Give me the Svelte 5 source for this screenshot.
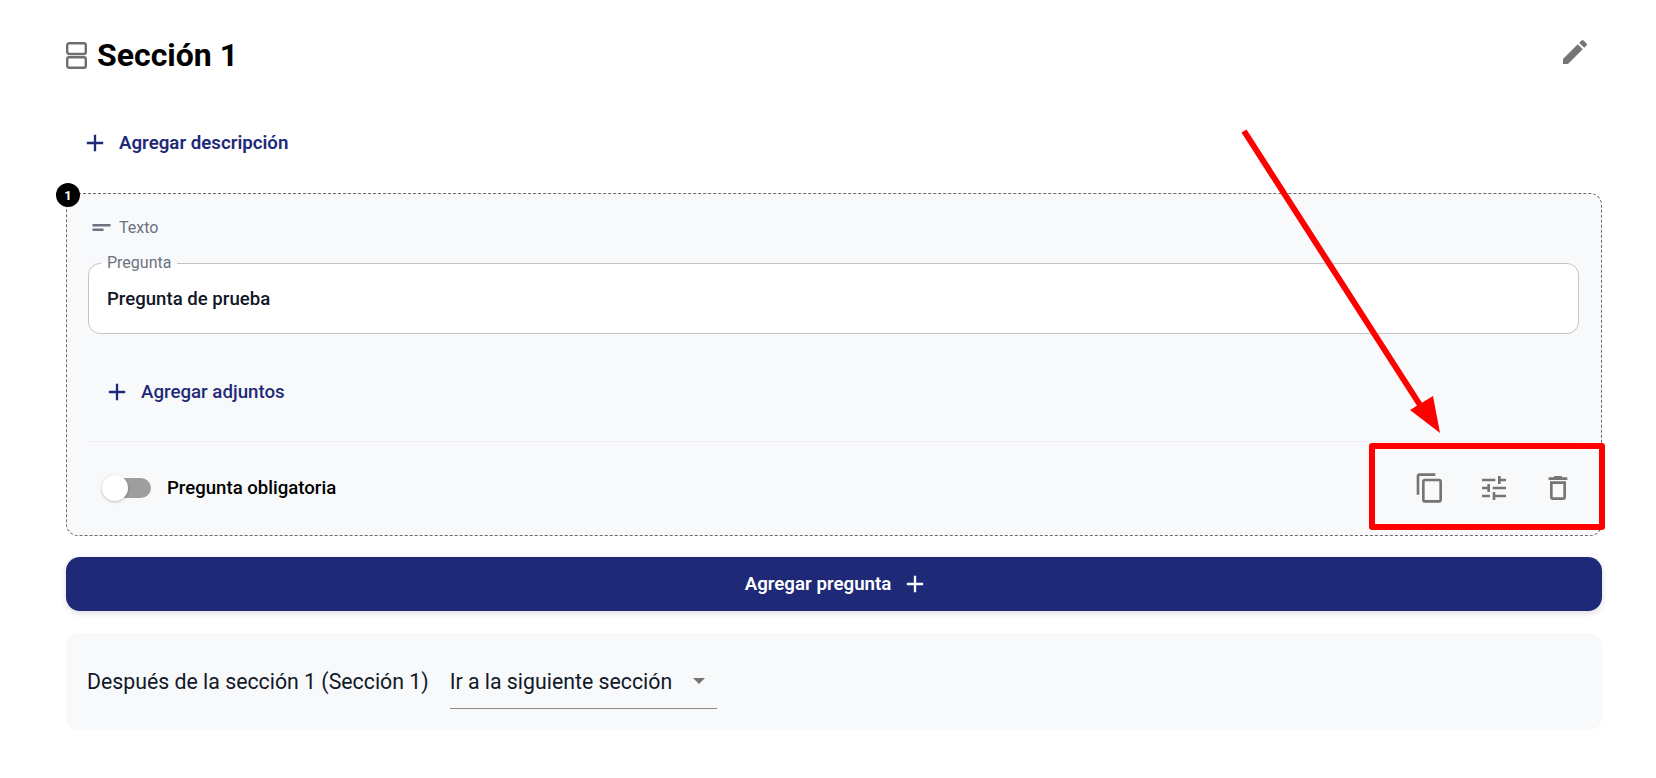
<script lang="ts">
	const PLUS = 'M19 13h-6v6h-2v-6H5v-2h6V5h2v6h6v2z';
</script>

<main class="section">
	<header class="section__head">
		<div class="section__title">
			<svg class="icon-rows" viewBox="0 0 21 27" width="21" height="27" aria-hidden="true">
				<rect x="1.2" y="1.2" width="18.600" height="10.800" rx="2" />
				<rect x="1.2" y="15.200" width="18.600" height="10.600" rx="2" />
			</svg>
			<h1>Sección 1</h1>
		</div>
		<button class="icon-btn edit" aria-label="Editar">
			<svg viewBox="0 0 24 24" width="32" height="32"><path d="M3 17.25V21h3.75L17.81 9.94l-3.75-3.75L3 17.25zM20.71 7.04a1 1 0 0 0 0-1.41l-2.34-2.34a1 1 0 0 0-1.41 0l-1.83 1.83 3.75 3.75 1.83-1.83z" /></svg>
		</button>
	</header>

	<button class="link link--desc">
		<svg viewBox="0 0 24 24" width="28" height="28"><path d={PLUS} /></svg>
		Agregar descripción
	</button>

	<section class="question">
		<span class="question__num">1</span>
		<div class="question__type">
			<svg viewBox="0 0 24 24" width="24" height="24"><path d="M4.500 9h18v2.500h-18zM4.500 13.500h11v2.500h-11z" /></svg>
			Texto
		</div>

		<div class="field">
			<span class="field__label">Pregunta</span>
			<div class="field__value">Pregunta de prueba</div>
		</div>

		<button class="link link--attach">
			<svg viewBox="0 0 24 24" width="28" height="28"><path d={PLUS} /></svg>
			Agregar adjuntos
		</button>

		<div class="question__foot">
			<div class="toggle">
				<span class="toggle__track"><span class="toggle__thumb"></span></span>
				<span class="toggle__label">Pregunta obligatoria</span>
			</div>
			<div class="actions">
				<svg viewBox="0 0 24 24" width="32" height="32"><path d="M16 1H4c-1.100 0-2 .9-2 2v14h2V3h12V1zm3 4H8c-1.100 0-2 .9-2 2v14c0 1.100.9 2 2 2h11c1.100 0 2-.9 2-2V7c0-1.100-.9-2-2-2zm0 16H8V7h11v14z" /></svg>
				<svg viewBox="0 0 24 24" width="32" height="32"><path d="M3 17v2h6v-2H3zM3 5v2h10V5H3zm10 16v-2h8v-2h-8v-2h-2v6h2zM7 9v2H3v2h4v2h2V9H7zm14 4v-2H11v2h10zm-6-4h2V7h4V5h-4V3h-2v6z" /></svg>
				<svg viewBox="0 0 24 24" width="32" height="32"><path d="M6 19c0 1.100.9 2 2 2h8c1.100 0 2-.9 2-2V7H6v12zM8 9h8v10H8V9zm7.500-5l-1-1h-5l-1 1H5v2h14V4z" /></svg>
			</div>
		</div>
	</section>

	<button class="add">
		Agregar pregunta
		<svg viewBox="0 0 24 24" width="28" height="28"><path d={PLUS} /></svg>
	</button>

	<div class="after">
		<span>Después de la sección 1 (Sección 1)</span>
		<div class="select">
			<span>Ir a la siguiente sección</span>
			<i class="select__caret"></i>
		</div>
	</div>
</main>

<!-- annotation drawn over the screenshot -->
<svg class="arrow" viewBox="0 0 1656 778" width="1656" height="778" aria-hidden="true">
	<line x1="1244" y1="131" x2="1420" y2="405" stroke="#ff0000" stroke-width="6" />
	<polygon points="1440,433 1410,410 1433,396" fill="#ff0000" />
</svg>
<div class="highlight"></div>

<style>
	:global(body) {
		background: #fff;
		font-family: Roboto, 'Liberation Sans', sans-serif;
	}

	button {
		border: 0;
		background: none;
		font: inherit;
		padding: 0;
	}

	.section {
		padding: 31px 54px 0 66px;
		display: flex;
		flex-direction: column;
	}

	.section__head {
		display: flex;
		justify-content: space-between;
		height: 48px;
		align-items: center;
	}

	.section__title {
		display: flex;
		align-items: center;
		gap: 10px;
	}

	.section__title h1 {
		margin: 0;
		font-size: 32px;
		font-weight: 700;
		color: #000;
		line-height: 48px;
	}

	.icon-rows rect {
		fill: none;
		stroke: #6e6e6e;
		stroke-width: 2.4;
	}

	.edit {
		margin-right: 11px;
		margin-top: -6px;
		height: 32px;
	}

	svg path {
		fill: currentColor;
	}

	.edit,
	.actions {
		color: #757575;
	}

	.link {
		display: flex;
		align-items: center;
		color: #1e2a78;
		font-size: 18.7px;
		font-weight: 500;
		align-self: flex-start;
	}

	.link--desc {
		margin: 40px 0 0 15px;
		height: 48px;
		gap: 10px;
		font-weight: 600;
	}

	.question {
		position: relative;
		margin-top: 26px;
		height: 343px;
		box-sizing: border-box;
		background: #f8f9fb;
		border: 1px dashed #6b6b6b;
		border-radius: 12px;
		padding: 0 22px 0 21px;
		display: flex;
		flex-direction: column;
	}

	.question__num {
		position: absolute;
		left: -11px;
		top: -11px;
		width: 24px;
		height: 24px;
		border-radius: 50%;
		background: #000;
		color: #fff;
		font-size: 13px;
		font-weight: 700;
		display: flex;
		align-items: center;
		justify-content: center;
	}

	.question__type {
		display: flex;
		align-items: center;
		gap: 7px;
		color: #6b7280;
		font-size: 16px;
		margin-top: 21px;
		height: 24px;
	}

	.field {
		position: relative;
		margin-top: 24px;
		height: 72px;
		box-sizing: border-box;
		background: #fff;
		border: 1px solid #c4c4c4;
		border-radius: 12px;
		padding: 0 18px;
		display: flex;
		align-items: center;
	}

	.field__label {
		position: absolute;
		left: 12px;
		top: -9px;
		padding: 0 6px;
		font-size: 16px;
		line-height: 16px;
		color: #6b7280;
		background: linear-gradient(#f8f9fb 50%, #fff 50%);
	}

	.field__value {
		font-size: 18.6px;
		font-weight: 500;
		color: #111827;
	}

	.link--attach {
		margin: 34px 0 0 15px;
		height: 48px;
		gap: 10px;
	}

	.question__foot {
		border-top: 1px solid #f0f0f2;
		margin-top: 25px;
		height: 94px;
		display: flex;
		justify-content: space-between;
		align-items: center;
	}

	.toggle {
		display: flex;
		align-items: center;
		gap: 16px;
		margin-left: 14px;
	}

	.toggle__track {
		position: relative;
		display: block;
		width: 37px;
		height: 20px;
		margin-left: 12px;
		border-radius: 10px;
		background: #9e9e9e;
	}

	.toggle__thumb {
		position: absolute;
		left: -12px;
		top: -3px;
		width: 26px;
		height: 26px;
		border-radius: 50%;
		background: #fff;
		box-shadow: 0 1px 3px rgba(0, 0, 0, 0.25);
	}

	.toggle__label {
		font-size: 18.6px;
		font-weight: 500;
		color: #000;
	}

	.actions {
		display: flex;
		gap: 32px;
		margin-right: 5px;
	}

	.add {
		margin-top: 21px;
		height: 54px;
		padding-left: 6px;
		border-radius: 14px;
		background: #1e2a78;
		color: #fff;
		font-size: 18.7px;
		font-weight: 600;
		display: flex;
		align-items: center;
		justify-content: center;
		gap: 10px;
		box-shadow: 0 2px 6px rgba(0, 0, 0, 0.15);
	}

	.after {
		margin-top: 22px;
		height: 97px;
		border-radius: 12px;
		background: #f8f9fb;
		padding-left: 21px;
		display: flex;
		align-items: center;
		gap: 21px;
		font-size: 21.3px;
		color: #111827;
	}

	.select {
		width: 267px;
		height: 55px;
		box-sizing: border-box;
		border-bottom: 1px solid #8c8c8c;
		display: flex;
		align-items: center;
		justify-content: space-between;
		padding-right: 12px;
	}

	.select__caret {
		width: 0;
		height: 0;
		border-left: 6px solid transparent;
		border-right: 6px solid transparent;
		border-top: 6px solid #757575;
	}

	.arrow {
		position: absolute;
		left: 0;
		top: 0;
		pointer-events: none;
	}

	.highlight {
		position: absolute;
		left: 1369px;
		top: 443px;
		width: 236px;
		height: 87px;
		box-sizing: border-box;
		border: 6px solid #ff0000;
		border-radius: 3px;
	}
</style>
